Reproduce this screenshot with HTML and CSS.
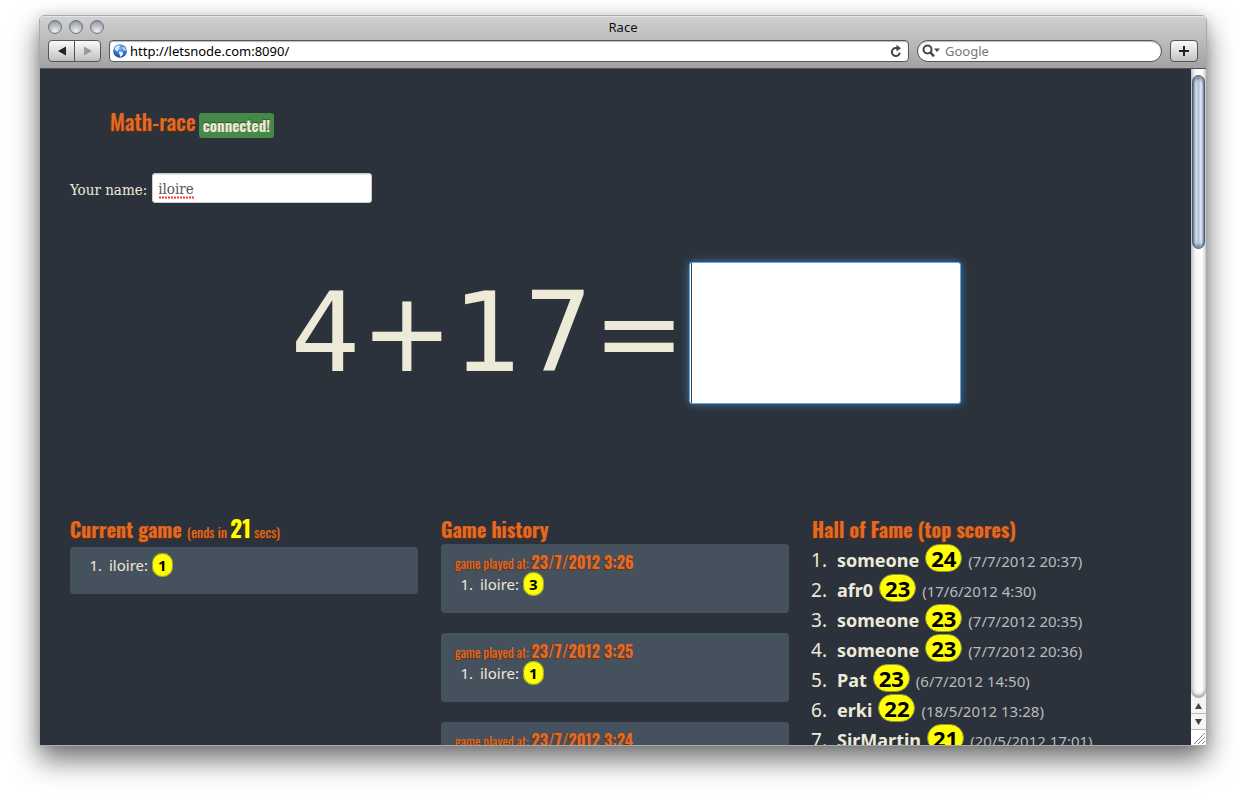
FILE: index.html
```html
<!DOCTYPE html>
<html lang="en">
<head>
<meta charset="utf-8">
<title>Race</title>
<link rel="stylesheet" href="styles.css">
</head>
<body>
<div class="window">
  <header class="chrome">
    <div class="titlebar">
      <div class="lights"><span class="light"></span><span class="light"></span><span class="light"></span></div>
      <div class="window-title">Race</div>
    </div>
    <div class="toolbar">
      <div class="nav">
        <button class="nav-btn" aria-label="Back"><svg width="10" height="10" viewBox="0 0 10 10"><path d="M1 5L9 0.5V9.5Z" fill="#222"/></svg></button>
        <button class="nav-btn" aria-label="Forward"><svg width="10" height="10" viewBox="0 0 10 10"><path d="M9 5L1 0.5V9.5Z" fill="#999"/></svg></button>
      </div>
      <div class="address">
        <svg class="globe" width="14" height="14" viewBox="0 0 14 14">
          <defs><radialGradient id="sea" cx="0.5" cy="0.3" r="0.75"><stop offset="0" stop-color="#7fb5ee"/><stop offset="0.6" stop-color="#2f6fc4"/><stop offset="1" stop-color="#14438f"/></radialGradient></defs>
          <circle cx="7" cy="7" r="6.8" fill="url(#sea)"/>
          <path d="M1.6 4Q3 1.6 6 1.2L7.2 2.2L6 3.4L6.6 4.6L4.6 6L5.2 7L4 7.4L2 6Z" fill="#d8ecff"/>
          <path d="M6.4 7.4L9 7.8L10.4 9.4L9 11.8L7.4 13L6.6 10.4L5.8 9Z" fill="#e6f4ff"/>
          <path d="M9.4 2.6L11.6 3.4L13 6L12.4 7.2L10.6 6L9.6 4.6Z" fill="#b9dafa"/>
        </svg>
        <input class="address-input" type="text" aria-label="Address" value="http://letsnode.com:8090/">
        <button class="reload" aria-label="Reload"><svg width="12" height="14" viewBox="0 0 12 14"><path d="M7.5 4H5.8A4 4 0 1 0 9.8 8.6" fill="none" stroke="#444" stroke-width="2"/><path d="M6.5 0.8L11 4.2L6.5 7.4Z" fill="#444"/></svg></button>
      </div>
      <div class="search">
        <svg width="18" height="14" viewBox="0 0 18 14"><circle cx="5.5" cy="5.5" r="4" fill="none" stroke="#444" stroke-width="2"/><path d="M8.5 8.5L12 12.4" stroke="#444" stroke-width="2.4"/><path d="M12 4.5H18L15 8Z" fill="#444"/></svg>
        <input class="search-input" type="text" aria-label="Search" placeholder="Google">
      </div>
      <button class="add" aria-label="New tab"><svg width="12" height="12" viewBox="0 0 12 12"><path d="M6 1V11M1 6H11" stroke="#222" stroke-width="2"/></svg></button>
    </div>
  </header>
  <div class="viewport">
    <main class="page">
      <div class="brand"><h1 class="logo">Math-race</h1><span class="status">connected!</span></div>
      <div class="name-row"><label for="name">Your name:</label><span class="name-field"><input id="name" class="name-input" type="text" value="iloire"><svg class="squiggle" width="36" height="3" viewBox="0 0 36 3"><path d="M1 1.5H36" stroke="#f33" stroke-width="2" stroke-dasharray="2 1"/></svg></span></div>
      <div class="equation"><label for="answer">4+17=</label><span class="answer-field"><input id="answer" class="answer" type="text"></span></div>
      <div class="columns">
        <section>
          <h2 class="heading heading-tall">Current game <small>(ends in <b class="secs">21</b> secs)</small></h2>
          <div class="card"><ol class="players"><li>iloire: <span class="points">1</span></li></ol></div>
        </section>
        <section>
          <h2 class="heading">Game history</h2>
          <div class="card card-history"><h3 class="played">game played at: <b>23/7/2012 3:26</b></h3><ol class="players"><li>iloire: <span class="points">3</span></li></ol></div>
          <div class="card card-history"><h3 class="played">game played at: <b>23/7/2012 3:25</b></h3><ol class="players"><li>iloire: <span class="points">1</span></li></ol></div>
          <div class="card card-history"><h3 class="played">game played at: <b>23/7/2012 3:24</b></h3></div>
        </section>
        <section>
          <h2 class="heading">Hall of Fame (top scores)</h2>
          <ol class="fame">
            <li><b>someone</b> <span class="score">24</span> <small>(7/7/2012 20:37)</small></li>
            <li><b>afr0</b> <span class="score">23</span> <small>(17/6/2012 4:30)</small></li>
            <li><b>someone</b> <span class="score">23</span> <small>(7/7/2012 20:35)</small></li>
            <li><b>someone</b> <span class="score">23</span> <small>(7/7/2012 20:36)</small></li>
            <li><b>Pat</b> <span class="score">23</span> <small>(6/7/2012 14:50)</small></li>
            <li><b>erki</b> <span class="score">22</span> <small>(18/5/2012 13:28)</small></li>
            <li><b>SirMartin</b> <span class="score">21</span> <small>(20/5/2012 17:01)</small></li>
          </ol>
        </section>
      </div>
    </main>
    <div class="scrollbar">
      <div class="track"><div class="thumb"></div></div>
      <button class="step" aria-label="Scroll up"><svg width="7" height="6" viewBox="0 0 7 6"><path d="M3.5 0L7 6H0Z" fill="#444"/></svg></button>
      <button class="step" aria-label="Scroll down"><svg width="7" height="6" viewBox="0 0 7 6"><path d="M3.5 6L7 0H0Z" fill="#444"/></svg></button>
      <div class="grip"><svg width="12" height="12" viewBox="0 0 12 12"><path d="M1 12L12 1M5 12L12 5M9 12L12 9" stroke="#888" stroke-width="1"/></svg></div>
    </div>
  </div>
</div>
</body>
</html>
```
FILE: styles.css
```css
* { box-sizing: border-box; }
body {
  margin: 0;
  height: 100vh;
  padding: 15px 39px 54px;
  background: #fff;
  overflow: hidden;
  font-family: "Noto Sans", sans-serif;
}
button { margin: 0; padding: 0; border: 0; background: none; }
input { margin: 0; font: inherit; }
svg { display: block; flex: none; }

.window {
  height: 100%;
  display: flex;
  flex-direction: column;
  border: 1px solid #aaa;
  border-radius: 5px 5px 0 0;
  box-shadow: 0 14px 28px rgba(0, 0, 0, 0.55), 0 0 12px rgba(0, 0, 0, 0.12);
}
.chrome {
  height: 53px;
  flex: none;
  border-bottom: 1px solid #555;
  border-radius: 4px 4px 0 0;
  background: linear-gradient(#d2d2d2, #a2a2a2);
  box-shadow: inset 0 1px #e4e4e4;
}
.titlebar { height: 24px; position: relative; }
.window-title {
  text-align: center;
  font-size: 13px;
  line-height: 22px;
  color: #111;
}
.lights { position: absolute; left: 8px; top: 4px; display: flex; gap: 7px; }
.light {
  width: 14px;
  height: 14px;
  border: 1px solid #6c747e;
  border-radius: 50%;
  background: radial-gradient(circle at 50% 85%, #eceef0 0, #c0c4c9 45%, #989da5 80%, #858b94 100%);
}
.toolbar { display: flex; align-items: center; padding: 0 8px; height: 22px; }
.nav {
  display: flex;
  width: 53px;
  height: 22px;
  margin-right: 8px;
  border: 1px solid #555;
  border-radius: 4px;
  background: linear-gradient(#fafafa, #c0c0c0);
}
.nav-btn { flex: 1; display: flex; align-items: center; justify-content: center; }
.nav-btn + .nav-btn { border-left: 1px solid #555; }
.address, .search {
  display: flex;
  align-items: center;
  height: 22px;
  border: 1px solid #555;
  background: #fff;
  box-shadow: inset 0 1px 1px #bbb;
}
.address { flex: 1; min-width: 0; padding: 0 6px 0 3px; border-radius: 4px; margin-right: 8px; }
.address-input, .search-input {
  flex: 1;
  min-width: 0;
  border: 0;
  padding: 0;
  outline: 0;
  background: none;
  font-size: 13px;
  color: #000;
}
.address-input { margin-left: 3px; }
.search { width: 245px; padding: 0 8px 0 4px; border-radius: 11px; margin-right: 8px; }
.search-input { margin-left: 5px; }
.search-input::placeholder { color: #777; opacity: 1; }
.add {
  width: 28px;
  height: 22px;
  display: flex;
  align-items: center;
  justify-content: center;
  border: 1px solid #555;
  border-radius: 4px;
  background: linear-gradient(#fafafa, #c4c4c4);
}

.viewport { flex: 1; min-height: 0; display: flex; overflow: hidden; }
.page {
  flex: 1;
  min-width: 0;
  overflow: hidden;
  padding: 36px 31px 0 30px;
  background: #2b323c;
  color: #eeead8;
}
.brand { display: flex; align-items: center; gap: 3px; height: 36px; margin-left: 40px; }
.logo, .status, .heading, .played {
  font-family: Oswald, "Liberation Sans", sans-serif;
  text-shadow: -1px 1px 1px #6b2f08;
}
.logo { margin: 0 0 4px; font-size: 22px; font-weight: 500; line-height: 32px; color: #e36a21; }
.status {
  margin-top: 5px;
  padding: 0 4px;
  border-radius: 3px;
  background: #468847;
  font-size: 15px;
  font-weight: bold;
  line-height: 25px;
  text-shadow: 0 -1px 0 #2c5530;
}
.name-row {
  display: flex;
  align-items: center;
  gap: 5px;
  margin-top: 32px;
  font-family: "DejaVu Serif Condensed", "Liberation Serif", serif;
  font-size: 15px;
}
.name-row label { padding-top: 4px; }
.name-field { position: relative; }
.name-input {
  display: block;
  width: 220px;
  height: 30px;
  padding: 2px 5px 0;
  border: 1px solid #ccc;
  border-radius: 3px;
  background: #fff;
  color: #555;
  box-shadow: inset 0 1px 1px rgba(0, 0, 0, 0.1);
}
.squiggle { position: absolute; left: 6px; bottom: 4px; }
.equation {
  display: flex;
  justify-content: center;
  align-items: center;
  gap: 4px;
  margin-top: 59px;
  padding-left: 22px;
  font-family: "DejaVu Sans", sans-serif;
  font-size: 110px;
  line-height: 140px;
}
.answer-field { position: relative; display: flex; }
.answer-field::before {
  content: "";
  position: absolute;
  left: 2px;
  top: 1px;
  bottom: 1px;
  width: 1px;
  background: #444;
}
.answer {
  width: 272px;
  height: 142px;
  padding: 0 2px;
  border: 1px solid #5aa8ee;
  border-radius: 3px;
  background: #fff;
  color: #555;
  box-shadow: 0 0 8px rgba(82, 168, 236, 0.6);
}
.columns {
  display: grid;
  grid-template-columns: repeat(3, minmax(0, 1fr));
  gap: 23px;
  margin-top: 110px;
  align-items: start;
}
.heading {
  margin: 0;
  height: 30px;
  font-size: 20px;
  line-height: 30px;
  color: #e36a21;
  white-space: nowrap;
}
.heading-tall { height: 33px; }
.heading small { font-size: 14px; font-weight: normal; }
.secs { font-size: 23px; line-height: 24px; color: #ff0; }
.card {
  min-height: 47px;
  padding: 8px 14px;
  border-radius: 4px;
  background: #46515e;
}
.card-history { height: 69px; margin-bottom: 20px; }
.played { margin: 0; font-size: 13px; font-weight: normal; line-height: 21px; color: #e36a21; }
.played b { font-size: 16px; }
.players { margin: 0; padding-left: 22px; font-size: 15px; line-height: 21px; }
.players li { padding-left: 3px; }
.points {
  padding: 1px 5px;
  border: 1px solid #8f9440;
  border-radius: 12px;
  background: #ff0;
  color: #000;
  font-weight: bold;
}
.fame { margin: 0; padding-left: 20px; font-size: 19px; line-height: 26px; white-space: nowrap; }
.fame li { height: 30px; padding-left: 5px; }
.fame b { font-size: 18px; }
.score {
  display: inline-block;
  margin: 0 1px;
  padding: 0 5px;
  border: 1px solid #8f9440;
  border-radius: 15px;
  background: #ff0;
  color: #000;
  font-size: 22px;
  font-weight: bold;
  line-height: 26px;
}
.fame small { font-size: 15px; line-height: 20px; color: #bbb; }

.scrollbar { width: 15px; flex: none; display: flex; flex-direction: column; background: #f4f4f4; }
.track {
  flex: 1;
  padding-top: 6px;
  border-radius: 0 0 8px 8px;
  background: linear-gradient(90deg, #ccc, #f4f4f4 30%, #fff 70%, #ddd);
  box-shadow: inset 0 -3px 3px #aaa;
}
.thumb {
  height: 174px;
  margin: 0 1px;
  border: 1px solid #4b5d75;
  border-radius: 7px;
  background: linear-gradient(90deg, #8296ae, #d5dfea 25%, #b3c1d1 50%, #e5f0fa 75%, #9aa9ba);
  box-shadow: inset 0 -3px 3px rgba(50, 70, 95, 0.5), inset 0 3px 3px rgba(50, 70, 95, 0.5);
}
.step {
  height: 16px;
  display: flex;
  align-items: center;
  justify-content: center;
  border-bottom: 1px solid #bbb;
}
.grip { height: 15px; padding: 2px; background: #fff; }
```
